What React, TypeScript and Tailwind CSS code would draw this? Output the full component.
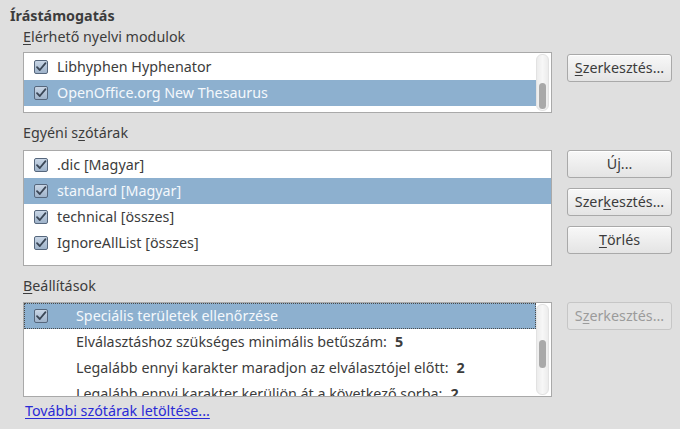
import React from "react";

const Check = () => (
  <span className="w-[14px] h-[14px] shrink-0 rounded-[2px] border border-[#56677d] bg-gradient-to-b from-[#c9d6e6] to-[#9fb3ca] flex items-center justify-center">
    <svg width="12" height="12" viewBox="0 0 12 12">
      <path d="M2 6.2 L4.8 9 L10.5 2.2" fill="none" stroke="#3a4656" strokeWidth="1.8" strokeLinecap="round" strokeLinejoin="round" />
    </svg>
  </span>
);

const U = ({ children }: { children: React.ReactNode }) => <span className="underline underline-offset-2">{children}</span>;

const Row = ({ text, sel, check = true, focus = false, indent = false, value }: { text: string; sel?: boolean; check?: boolean; focus?: boolean; indent?: boolean; value?: string }) => (
  <div
    className={`h-[26px] shrink-0 flex items-center pl-[10px] ${sel ? "bg-[#8db0cf] text-[#f4f8fc]" : "text-[#3c3c3c]"} ${focus ? "outline outline-1 outline-dotted outline-[#4a4a4a] -outline-offset-1" : ""}`}
  >
    {check ? <Check /> : <span className="w-[14px] shrink-0" />}
    <span className={`${indent ? "ml-[28px]" : "ml-[9px]"} whitespace-nowrap`}>
      {text}
      {value && <b className="font-bold ml-[8px]">{value}</b>}
    </span>
  </div>
);

const Scroll = ({ top, h }: { top: number; h: number }) => (
  <div className="w-[13px] shrink-0 my-[1px] mr-[2px] rounded-[6px] bg-gradient-to-r from-[#ececec] via-[#f7f7f7] to-[#ececec] border border-[#e2e2e2] relative">
    <div className="absolute left-[2px] w-[7px] rounded-[4px] bg-[#a9a9a9]" style={{ top, height: h }} />
  </div>
);

const Btn = ({ children, disabled }: { children: React.ReactNode; disabled?: boolean }) => (
  <div
    className={`w-[105px] h-[28px] rounded-[3px] border flex items-center justify-center ${disabled ? "border-[#c6c6c6] bg-[#e3e3e3] text-[#9b9b9b]" : "border-[#a9a9a9] bg-gradient-to-b from-[#f8f8f8] to-[#e4e4e4] text-[#3c3c3c] shadow-[inset_0_1px_0_#ffffff]"}`}
  >
    {children}
  </div>
);

export default function App() {
  return (
    <div
      className="w-[680px] h-[429px] bg-[#dfdfdf] text-[#3c3c3c] text-[14.3px] overflow-hidden flex flex-col"
      style={{ fontFamily: '"Noto Sans", "Open Sans", sans-serif' }}
    >
      <div className="pl-[10px] pt-[6px] h-[24px] leading-[20px] font-bold">Írástámogatás</div>
      <div className="pl-[23px] flex flex-col">
        <div className="h-[24px] leading-[24px] pt-[1px]"><U>E</U>lérhető nyelvi modulok</div>
        <div className="flex mt-[4px]">
          <div className="w-[529px] h-[61px] bg-white border border-[#a9a9a9] flex">
            <div className="flex-1 flex flex-col pt-[1px]">
              <Row text="Libhyphen Hyphenator" />
              <Row text="OpenOffice.org New Thesaurus" sel />
            </div>
            <Scroll top={28} h={26} />
          </div>
          <div className="ml-[15px] mt-[2px]">
            <Btn><U>S</U>zerkesztés...</Btn>
          </div>
        </div>

        <div className="h-[24px] leading-[24px] mt-[8px]">Egyéni s<U>z</U>ótárak</div>
        <div className="flex mt-[5px]">
          <div className="w-[529px] h-[116px] bg-white border border-[#a9a9a9] flex flex-col pt-[1px]">
            <Row text=".dic [Magyar]" />
            <Row text="standard [Magyar]" sel />
            <Row text="technical [összes]" />
            <Row text="IgnoreAllList [összes]" />
          </div>
          <div className="ml-[15px] flex flex-col gap-[10px]">
            <Btn>Ú<U>j</U>...</Btn>
            <Btn>Szer<U>k</U>esztés...</Btn>
            <Btn><U>T</U>örlés</Btn>
          </div>
        </div>

        <div className="h-[24px] leading-[24px] mt-[8px]"><U>B</U>eállítások</div>
        <div className="flex mt-[4px]">
          <div className="w-[529px] h-[95px] bg-white border border-[#a9a9a9] flex overflow-hidden">
            <div className="flex-1 flex flex-col overflow-hidden">
              <Row text="Speciális területek ellenőrzése" sel focus indent />
              <Row text="Elválasztáshoz szükséges minimális betűszám:" value="5" check={false} indent />
              <Row text="Legalább ennyi karakter maradjon az elválasztójel előtt:" value="2" check={false} indent />
              <Row text="Legalább ennyi karakter kerüljön át a következő sorba:" value="2" check={false} indent />
            </div>
            <Scroll top={35} h={28} />
          </div>
          <div className="ml-[15px]">
            <Btn disabled>S<U>z</U>erkesztés...</Btn>
          </div>
        </div>
        <div className="mt-[3px] pl-[2px] h-[22px] leading-[22px] text-[#2a2ad6] underline underline-offset-2">További szótárak letöltése...</div>
      </div>
    </div>
  );
}
